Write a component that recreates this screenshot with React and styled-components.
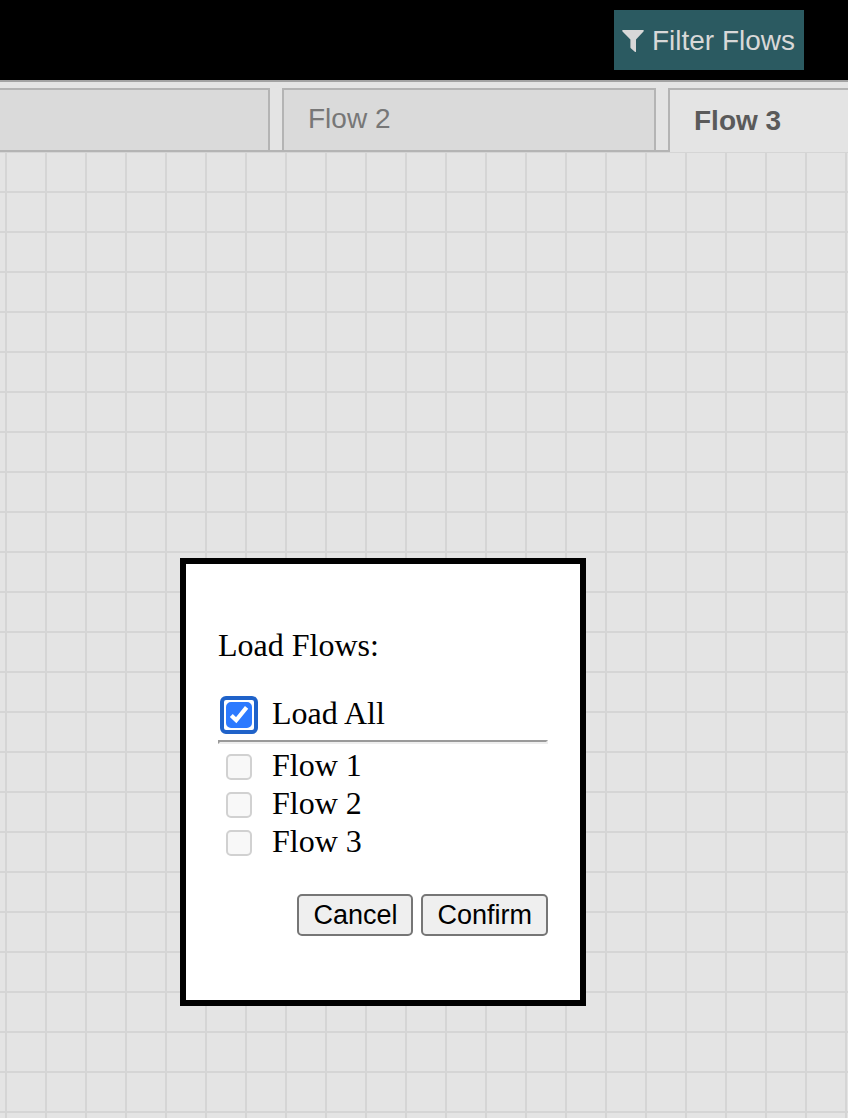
import React, { useState } from "react";
import styled, { createGlobalStyle } from "styled-components";

const SANS = `"Liberation Sans", Arial, Helvetica, sans-serif`;
const SERIF = `"Liberation Serif", "Times New Roman", serif`;

const GlobalStyle = createGlobalStyle`
  *, *::before, *::after { box-sizing: border-box; }
  body { margin: 0; background: #e4e4e4; }
`;

const Page = styled.div`
  display: flex;
  flex-direction: column;
  min-height: 100vh;
  overflow: hidden;
`;

const Header = styled.header`
  display: flex;
  justify-content: flex-end;
  align-items: center;
  padding: 10px 44px 10px 16px;
  background: #000;
  border-bottom: 2px solid #a3a3a3;
`;

const FilterButton = styled.button`
  display: flex;
  align-items: center;
  gap: 8px;
  height: 60px;
  padding: 2px 9px 0 8px;
  border: 0;
  background: #2b5a61;
  color: #d8d8d8;
  font: 28px/32px ${SANS};
  white-space: nowrap;
`;

const TabStrip = styled.div`
  display: flex;
  gap: 12px;
  padding-top: 6px;
  background: #e4e4e4;
  border-bottom: 2px solid #b4b4b4;
`;

const Tab = styled.button`
  flex: none;
  width: ${(p) => (p.$cut ? 270 : 374)}px;
  height: ${(p) => (p.$active ? 64 : 62)}px;
  margin: 0 0 ${(p) => (p.$active ? -2 : 0)}px;
  padding: ${(p) => (p.$active ? "0 24px" : "0 24px 2px")};
  border: 2px solid #b4b4b4;
  border-bottom: 0;
  border-left-width: ${(p) => (p.$cut ? 0 : 2)}px;
  border-radius: 0;
  background: ${(p) => (p.$active ? "#e4e4e4" : "#dadada")};
  color: ${(p) => (p.$active ? "#5a5a5a" : "#777")};
  font: ${(p) => (p.$active ? "bold" : "normal")} 28px/32px ${SANS};
  text-align: left;
`;

const Canvas = styled.main`
  position: relative;
  flex: 1;
  min-height: 966px;
  background-color: #e4e4e4;
  background-image: linear-gradient(#d5d5d5 2px, transparent 2px),
    linear-gradient(90deg, #d5d5d5 2px, transparent 2px);
  background-size: 40px 40px;
  background-position: 5px -1px;
`;

const Dialog = styled.form`
  position: absolute;
  top: 406px;
  left: 180px;
  width: 406px;
  padding: 64px 32px;
  border: 6px solid #000;
  background: #fff;
  color: #000;
  font: 32px/38px ${SERIF};
`;

const Title = styled.p`
  margin: 0 0 32px;
  line-height: 34px;
`;

const Option = styled.label`
  display: flex;
  align-items: flex-start;
  gap: 14px;
  height: 38px;
  padding-left: 2px;
`;

const CheckFrame = styled.span`
  position: relative;
  flex: none;
  display: flex;
  margin-top: 2px;
  padding: 2px;
  border: 4px solid ${(p) => (p.$ring ? "#1f62c9" : "transparent")};
  border-radius: 6px;
`;

const CheckInput = styled.input`
  appearance: none;
  width: 26px;
  height: 26px;
  margin: 0;
  border: 2px solid #767676;
  border-radius: 5px;
  background: #fff;
  outline: none;

  &:checked {
    border-color: #2d7aff;
    background: #2d7aff;
  }
  &:disabled {
    border-color: #d1d1d1;
    background: #f8f8f8;
  }
`;

const CheckMark = styled.svg`
  position: absolute;
  top: 2px;
  left: 2px;
  pointer-events: none;
`;

const Divider = styled.hr`
  height: 4px;
  margin: 8px 0 2px;
  border: 2px solid;
  border-color: #9a9a9a #eee #eee #9a9a9a;
`;

const Actions = styled.div`
  display: flex;
  justify-content: flex-end;
  gap: 8px;
  margin-top: 34px;
`;

const ActionButton = styled.button`
  height: 42px;
  padding: 0 14px;
  border: 2px solid #767676;
  border-radius: 5px;
  background: #efefef;
  color: #000;
  font: 27px/32px ${SANS};
`;

function FunnelIcon() {
  return (
    <svg width="22" height="22" viewBox="0 0 22 22" fill="currentColor" aria-hidden="true">
      <path d="M.8 0h20.4q1 .6.3 1.4L14 9.4v12q-.3.9-1.2.4L8.8 18.2q-.4-.4-.4-1V9.4L.5 1.4Q-.2.6.8 0z" />
    </svg>
  );
}

function CheckOption({ label, ring, ...input }) {
  return (
    <Option>
      <CheckFrame $ring={ring}>
        <CheckInput type="checkbox" {...input} />
        {input.checked && (
          <CheckMark width="26" height="26" viewBox="0 0 26 26" fill="none" stroke="#fff" strokeWidth="4.2">
            <path d="M5.3 13.4l4.9 4.8L20.6 5.4" />
          </CheckMark>
        )}
      </CheckFrame>
      {label}
    </Option>
  );
}

const FLOWS = ["Flow 1", "Flow 2", "Flow 3"];

export default function App() {
  const [loadAll, setLoadAll] = useState(true);
  const [picked, setPicked] = useState({});

  return (
    <>
      <GlobalStyle />
      <Page>
        <Header>
          <FilterButton type="button">
            <FunnelIcon />
            Filter Flows
          </FilterButton>
        </Header>
        <TabStrip role="tablist">
          <Tab type="button" role="tab" aria-label="Flow 1" $cut />
          <Tab type="button" role="tab">Flow 2</Tab>
          <Tab type="button" role="tab" aria-selected="true" $active>Flow 3</Tab>
        </TabStrip>
        <Canvas>
          <Dialog role="dialog" aria-label="Load Flows" onSubmit={(e) => e.preventDefault()}>
            <Title>Load Flows:</Title>
            <CheckOption
              label="Load All"
              ring
              checked={loadAll}
              onChange={(e) => setLoadAll(e.target.checked)}
            />
            <Divider />
            {FLOWS.map((name) => (
              <CheckOption
                key={name}
                label={name}
                disabled={loadAll}
                checked={!!picked[name]}
                onChange={(e) => setPicked({ ...picked, [name]: e.target.checked })}
              />
            ))}
            <Actions>
              <ActionButton type="button">Cancel</ActionButton>
              <ActionButton type="submit">Confirm</ActionButton>
            </Actions>
          </Dialog>
        </Canvas>
      </Page>
    </>
  );
}
